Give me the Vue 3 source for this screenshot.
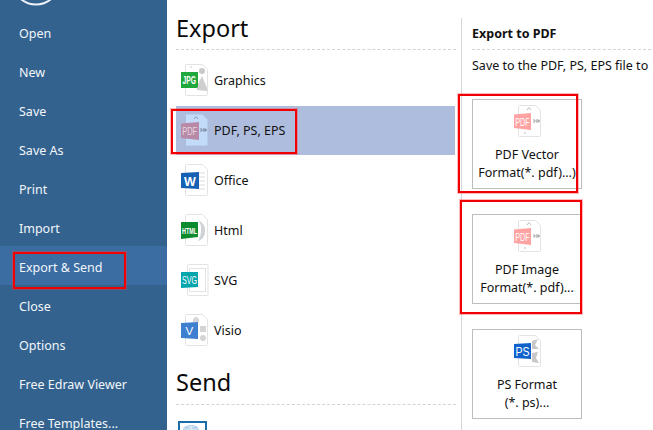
<script setup>
const menu = ['Open', 'New', 'Save', 'Save As', 'Print', 'Import', 'Export & Send', 'Close', 'Options', 'Free Edraw Viewer', 'Free Templates...']
const formats = [
  { label: 'Graphics', icon: 'jpg' },
  { label: 'PDF, PS, EPS', icon: 'pdfsel', selected: true },
  { label: 'Office', icon: 'word' },
  { label: 'Html', icon: 'html' },
  { label: 'SVG', icon: 'svg' },
  { label: 'Visio', icon: 'visio' }
]
const cards = [
  { lines: ['PDF Vector', 'Format(*. pdf)...)'], icon: 'pdf' },
  { lines: ['PDF Image', 'Format(*. pdf)...'], icon: 'pdf' },
  { lines: ['PS Format', '(*. ps)...'], icon: 'ps' }
]
</script>

<template>
  <div class="app">
    <svg class="defs" width="0" height="0" aria-hidden="true">
      <defs>
        <symbol id="page" viewBox="0 0 28 32">
          <path d="M4.5 1.5 Q4.5 .5 5.5 .5 H21.5 L26.5 5.5 V30.5 Q26.5 31.5 25.5 31.5 H5.5 Q4.5 31.5 4.5 30.5 Z" fill="#fff" stroke="#e3e3e3" />
        </symbol>
        <symbol id="jpg" viewBox="0 0 28 32">
          <use href="#page" width="28" height="32" />
          <path d="M9 3 h2" stroke="#ccc" />
          <circle cx="21" cy="7" r="3" fill="#c9c9c9" />
          <path d="M16 26 V22 L21 12 L26 24 V27 Z" fill="#cfcfcf" />
          <path d="M0 8 H17 V22.500 L16 24 H0 Z" fill="#1fa83e" />
          <text x="1.500" y="20" class="b" font-size="10" textLength="13.500" lengthAdjust="spacingAndGlyphs">JPG</text>
        </symbol>
        <symbol id="pdf" viewBox="0 0 28 32">
          <use href="#page" width="28" height="32" />
          <path d="M13 5 L15 2.500 L17 5" stroke="#bbb" fill="none" />
          <path d="M10 28 h2" stroke="#bbb" />
          <path d="M20 16 h6 M20 14 v4 M22 15 h3 v2 h-3" stroke="#a9a9a9" fill="none" />
          <path d="M0 9.500 L17 8 V25 L0 23 Z" fill="#ffa2a2" />
          <text x="1.200" y="20.500" class="b thin" font-size="11.500" textLength="14.500" lengthAdjust="spacingAndGlyphs">PDF</text>
        </symbol>
        <symbol id="pdfsel" viewBox="0 0 28 32">
          <path d="M5 .5 H21.500 L26.500 5.500 V31.500 H5 Z" fill="#c2dbf8" />
          <path d="M13 5 L15 2.500 L17 5" stroke="#8d9cb8" fill="none" />
          <path d="M20 16 h6 M20 14 v4 M22 15 h3 v2 h-3" stroke="#7f8aa3" fill="none" />
          <path d="M0 9.500 L18 8 V26 L0 24 Z" fill="#b98aa8" />
          <text x="1.200" y="21" class="b thin" font-size="11.500" fill-opacity=".65" textLength="15" lengthAdjust="spacingAndGlyphs">PDF</text>
        </symbol>
        <symbol id="word" viewBox="0 0 28 32">
          <use href="#page" width="28" height="32" />
          <path d="M18 9 h6 M18 13 h6 M18 17 h6 M18 21 h6 M18 25 h6" stroke="#dcdcdc" />
          <path d="M0 9 L18 8 V25 L0 24 Z" fill="#1761b5" />
          <text x="3" y="21.500" class="b" font-size="12.500">W</text>
        </symbol>
        <symbol id="html" viewBox="0 0 28 32">
          <use href="#page" width="28" height="32" />
          <path d="M17 6 A11 11 0 0 1 24 18 A10 10 0 0 1 17 27 A18 18 0 0 0 20 17 A14 14 0 0 0 17 6 Z" fill="#cfd3d6" />
          <path d="M0 8 H17 V23 L0 25 Z" fill="#0b8a2e" />
          <text x="1" y="19.500" class="b" font-size="8.500" textLength="15" lengthAdjust="spacingAndGlyphs">HTML</text>
        </symbol>
        <symbol id="svg" viewBox="0 0 28 32">
          <path d="M6.500 1.500 Q6.500 .5 7.500 .5 H26 Q27 .5 27 1.500 V30.500 Q27 31.500 26 31.500 H7.500 Q6.500 31.500 6.500 30.500 Z" fill="#fff" stroke="#e3e3e3" />
          <rect x="8.500" y="4.500" width="16" height="23" fill="none" stroke="#e3e3e3" />
          <path d="M0 8 H17 V23 L0 24 Z" fill="#04a5ad" />
          <text x="1" y="20" class="b thin" font-size="10.500" textLength="15" lengthAdjust="spacingAndGlyphs">SVG</text>
        </symbol>
        <symbol id="visio" viewBox="0 0 28 32">
          <use href="#page" width="28" height="32" />
          <path d="M12 5 L15 2.500 L18 5 V8 H12 Z" fill="#d6d6d6" />
          <rect x="19" y="12" width="6" height="6" fill="#d4d4d4" />
          <circle cx="22" cy="24" r="3" fill="#d4d4d4" />
          <path d="M0 9 L17 8 V25 L0 24 Z" fill="#3f7fd0" />
          <text x="4.500" y="21" class="b thin" font-size="11.500">V</text>
        </symbol>
        <symbol id="ps" viewBox="0 0 28 32">
          <use href="#page" width="28" height="32" />
          <path d="M18 6 L24 4 L21 10 L25 14 H18 Z M18 18 L24 17 L22 23 L25 28 L18 27 Z" fill="#c8c8c8" />
          <path d="M0 9 L17 8 V24 L0 23 Z" fill="#0f62cc" />
          <text x="1.500" y="20.500" class="b thin" font-size="12" textLength="14" lengthAdjust="spacingAndGlyphs">PS</text>
        </symbol>
      </defs>
    </svg>

    <nav class="side">
      <div class="logo">
        <svg width="40" height="12" viewBox="0 0 40 12">
          <circle cx="21" cy="-19" r="23.500" fill="none" stroke="#eef3f8" stroke-width="2" />
        </svg>
      </div>
      <div v-for="m in menu" :key="m" class="nav" :class="{ on: m === 'Export & Send' }">{{ m }}</div>
    </nav>

    <main class="mid">
      <h1 class="head">Export</h1>
      <div class="list">
        <div v-for="f in formats" :key="f.label" class="row" :class="{ sel: f.selected }">
          <svg class="ico" viewBox="0 0 28 32"><use :href="'#' + f.icon" width="28" height="32" /></svg>
          <span>{{ f.label }}</span>
        </div>
      </div>
      <h1 class="head send">Send</h1>
      <div class="sendicon">
        <svg width="30" height="12" viewBox="0 0 30 12">
          <rect x="1" y="1" width="27" height="20" fill="#fff" stroke="#1a6da8" stroke-width="2" />
          <ellipse cx="13" cy="9" rx="8" ry="5" fill="#a9cbe6" />
          <path d="M6 8 h14 M13 4 v10 M9 5 q4 3 8 0" stroke="#e6f1fa" fill="none" />
        </svg>
      </div>
    </main>

    <aside class="right">
      <h2 class="title">Export to PDF</h2>
      <p class="desc">Save to the PDF, PS, EPS file to</p>
      <div class="cards">
        <div v-for="c in cards" :key="c.lines[0]" class="card">
          <svg class="ico" viewBox="0 0 28 32"><use :href="'#' + c.icon" width="28" height="32" /></svg>
          <div v-for="l in c.lines" :key="l" class="line">{{ l }}</div>
        </div>
      </div>
    </aside>

    <div class="mark m1"></div>
    <div class="mark m2"></div>
    <div class="mark m3"></div>
    <div class="mark m4"></div>
  </div>
</template>

<style scoped>
.app {
  position: relative;
  display: flex;
  width: 653px;
  height: 430px;
  overflow: hidden;
  background: #fff;
  color: #111;
  font-family: "Noto Sans", "Open Sans", sans-serif;
  font-size: 12.5px;
}
.defs { position: absolute; }
.side {
  flex: none;
  width: 167px;
  background: #34628f;
  color: #f2f6fa;
}
.logo { height: 12px; padding-left: 15px; overflow: hidden; }
.logo svg { display: block; }
.nav {
  height: 39px;
  line-height: 44px;
  padding-left: 19px;
  white-space: nowrap;
}
.nav.on { background: #3b6da3; }
.mid {
  flex: none;
  width: 294px;
  padding: 0 6px 0 9px;
  box-sizing: border-box;
}
.head {
  margin: 0;
  height: 50px;
  box-sizing: border-box;
  border-bottom: 1px dashed #d4d4d4;
  width: 280px;
  font-size: 23.5px;
  font-weight: 400;
  line-height: 57px;
  color: #0a0a0a;
}
.list { padding-top: 6px; }
.row {
  display: flex;
  align-items: center;
  width: 279px;
  height: 49px;
  margin-bottom: 1px;
  padding: 0 0 1px 5px;
  box-sizing: border-box;
}
.row .ico { margin-right: 5px; }
.row.sel { background: #aebddd; }
.ico { flex: none; display: block; width: 28px; height: 32px; }
.head.send {
  height: 49px;
  line-height: 53px;
}
.sendicon { padding: 16px 0 0 2px; }
.sendicon svg { display: block; }
.right {
  flex: none;
  width: 192px;
  margin-top: 18px;
  padding-left: 10px;
  box-sizing: border-box;
  border-left: 1px solid #d6d6d6;
}
.title {
  margin: 0;
  width: 179px;
  height: 32px;
  box-sizing: border-box;
  border-bottom: 1px dashed #d4d4d4;
  font-size: 12.5px;
  font-weight: 700;
  line-height: 31px;
  color: #111;
}
.desc {
  margin: 0;
  height: 49px;
  line-height: 31px;
  white-space: nowrap;
}
.cards { display: flex; flex-direction: column; gap: 25px; }
.card {
  width: 110px;
  height: 90px;
  box-sizing: border-box;
  border: 1px solid #bdbdbd;
  padding-top: 5px;
  text-align: center;
}
.card .ico { margin: 0 auto 9px 41px; }
.line { height: 18px; line-height: 18px; white-space: nowrap; }
.mark {
  position: absolute;
  box-sizing: border-box;
  border: 2px solid #f00000;
  box-shadow: 0 0 0 1px rgba(255, 60, 60, .35);
}
.m1 { left: 13px; top: 252px; width: 113px; height: 37px; }
.m2 { left: 171px; top: 109px; width: 126px; height: 45px; }
.m3 { left: 458px; top: 94px; width: 120px; height: 99px; }
.m4 { left: 460px; top: 200px; width: 122px; height: 114px; }
</style>

<style>
.b { fill: #fff; font-family: "Liberation Sans", sans-serif; font-weight: 700; }
.b.thin { font-weight: 400; }
</style>
